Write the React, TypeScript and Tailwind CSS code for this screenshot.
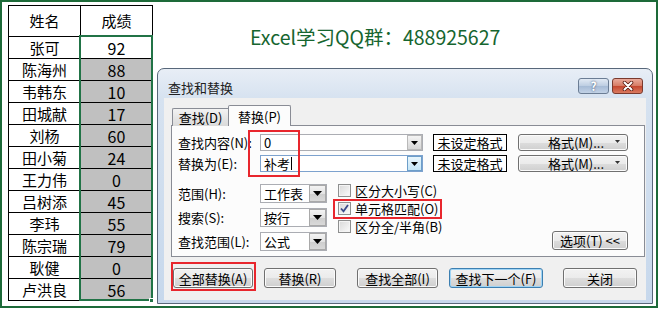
import React from "react";

const names = ["张可", "陈海州", "韦韩东", "田城献", "刘杨", "田小菊", "王力伟", "吕树添", "李玮", "陈宗瑞", "耿健", "卢洪良"];
const scores = [92, 88, 10, 17, 60, 24, 0, 45, 55, 79, 0, 56];

function Arrow({ big }: { big?: boolean }) {
  return big ? (
    <svg width="9" height="5" viewBox="0 0 9 5">
      <path d="M0 0H9L4.5 5Z" fill="#000" />
    </svg>
  ) : (
    <svg width="7" height="4" viewBox="0 0 7 4">
      <path d="M0 0H7L3.5 4Z" fill="#000" />
    </svg>
  );
}

function Btn({ children, className, focused }: { children: React.ReactNode; className?: string; focused?: boolean }) {
  return (
    <div
      className={`relative flex items-center justify-center rounded-[3px] border text-[13px] leading-none text-black bg-[linear-gradient(#f2f2f2_0%,#ebebeb_50%,#dddddd_51%,#cfcfcf_100%)] ${
        focused ? "border-[#3c7fb1] shadow-[inset_0_0_0_1px_#9fd4f5]" : "border-[#707070] shadow-[inset_0_0_0_1px_#fbfbfb]"
      } ${className ?? ""}`}
    >
      {children}
    </div>
  );
}

function Combo({ text, focused, cursor }: { text: string; focused?: boolean; cursor?: boolean }) {
  return (
    <div className={`flex h-[17px] w-[163px] border bg-white ${focused ? "border-[#7da2ce]" : "border-[#abadb3]"}`}>
      <div className="flex flex-1 items-center pl-[3px] text-[13px] leading-none">
        {text}
        {cursor && <span className="ml-px inline-block h-[13px] w-px bg-black" />}
      </div>
      <div
        className={`flex h-full w-[15px] items-center justify-center border ${
          focused ? "border-[#6d9ec9] bg-[linear-gradient(#e8f5fc,#c6e6f7)]" : "border-[#b9b9b9] bg-[linear-gradient(#f4f4f4,#d6d6d6)]"
        }`}
      >
        <Arrow />
      </div>
    </div>
  );
}

function Select({ text }: { text: string }) {
  return (
    <div className="flex h-[19px] w-[67px] border border-[#abadb3] bg-white">
      <div className="flex flex-1 items-center pl-[3px] text-[13px] leading-none">{text}</div>
      <div className="flex h-full w-[17px] items-center justify-center border border-[#a9a9a9] bg-[linear-gradient(#f3f3f3,#e3e3e3_50%,#cdcdcd_51%,#d9d9d9)]">
        <Arrow big />
      </div>
    </div>
  );
}

function Check({ checked }: { checked?: boolean }) {
  return (
    <div className="flex h-[13px] w-[13px] items-center justify-center border border-[#8e8f8f] bg-[linear-gradient(135deg,#d8d8d8,#fbfbfb)] shadow-[inset_0_0_0_1px_#f4f4f4]">
      {checked && (
        <svg width="9" height="9" viewBox="0 0 9 9">
          <path d="M1 4.5L3.5 7.3L8 1" stroke="#3b4a8a" strokeWidth="1.8" fill="none" />
        </svg>
      )}
    </div>
  );
}

function Table() {
  return (
    <div className="ml-[6px] mt-[3px] grid grid-cols-[72px_72px] border-l border-t border-black">
      <div className="flex h-[31px] items-center justify-center border-b border-r border-black text-[15px]">姓名</div>
      <div className="flex h-[31px] items-center justify-center border-b border-r border-black text-[15px]">成绩</div>
      {names.map((n, i) => (
        <React.Fragment key={n + i}>
          <div className="flex h-[22px] items-center justify-center border-b border-r border-black text-[15px] leading-none">{n}</div>
          <div
            className={`flex h-[22px] items-center justify-center border-b border-r border-black text-[16px] leading-none ${
              i === 0 ? "bg-white" : "bg-[#c0c0c0]"
            }`}
          >
            {scores[i]}
          </div>
        </React.Fragment>
      ))}
    </div>
  );
}

export default function App() {
  return (
    <div className="relative h-[310px] w-[659px] overflow-hidden bg-white font-['Noto_Sans_CJK_SC','Noto_Sans',sans-serif] text-black">
      <div className="flex h-[308px] w-[658px] items-start border-2 border-[#1d6a39]">
        <Table />
        <div className="ml-[97px] mt-[21px] whitespace-nowrap text-[19.5px] leading-[28px] text-[#16652f]">Excel学习QQ群：488925627</div>
      </div>

      {/* Excel selection */}
      <div className="absolute left-[79px] top-[35px] h-[266px] w-[74px] border-2 border-[#217346]" />
      <div className="absolute left-[149px] top-[298px] h-[5px] w-[5px] border border-white bg-[#217346]" />

      {/* Dialog */}
      <div className="absolute left-[157px] top-[68px] flex h-[236px] w-[496px] flex-col rounded-t-[7px] border border-[#58677a] bg-[linear-gradient(#e8eef6,#d6e2f0_30px,#c7d8ec)]">
        <div className="flex h-[29px] shrink-0 items-start">
          <span className="ml-[10px] mt-[11px] text-[13px] leading-[16px] text-[#202020]">查找和替换</span>
          <div className="ml-auto mr-[9px] mt-[9px] flex gap-[3px]">
            <div className="flex h-[16px] w-[31px] items-center justify-center rounded-[3px] border border-[#6b7d94] bg-[linear-gradient(#e2eaf4,#bccde2_50%,#a6bbd6_51%,#c2d2e6)] text-[12px] font-bold leading-none text-white [text-shadow:0_0_2px_#2a3f5f]">
              ?
            </div>
            <div className="flex h-[16px] w-[31px] items-center justify-center rounded-[3px] border border-[#7a3a2e] bg-[linear-gradient(#eaaa9b,#d67a63_50%,#c4462e_51%,#da7a60)]">
              <svg width="14" height="10" viewBox="0 0 14 10">
                <path d="M3.5 1.5L10.5 8.5M10.5 1.5L3.5 8.5" stroke="#5a1a10" strokeWidth="3.6" strokeLinecap="round" />
                <path d="M3.5 1.5L10.5 8.5M10.5 1.5L3.5 8.5" stroke="#fff" strokeWidth="2" strokeLinecap="round" />
              </svg>
            </div>
          </div>
        </div>

        <div className="mx-[6px] mb-[3px] flex flex-1 flex-col bg-[#f0f0f0]">
          {/* Tabs */}
          <div className="relative z-10 -mb-px ml-[8px] mt-[7px] flex h-[21px] items-end">
            <div className="flex h-[18px] w-[56px] items-center justify-center rounded-tl-[2px] border border-b-0 border-r-0 border-[#898c95] bg-[linear-gradient(#f3f3f3,#e6e6e6_50%,#dadada)] text-[13px] leading-none">
              查找(D)
            </div>
            <div className="flex h-[21px] w-[63px] items-center justify-center rounded-t-[2px] border border-b-0 border-[#898c95] bg-[#fcfcfc] text-[13px] leading-none">
              替换(P)
            </div>
          </div>

          {/* Panel */}
          <div className="ml-[7px] flex h-[132px] w-[474px] flex-col border border-[#898c95] bg-[#fcfcfc]">
            <div className="mt-[8px] flex h-[17px] items-center pl-[6px]">
              <div className="w-[82px] text-[13px] leading-none">查找内容(N):</div>
              <Combo text="0" />
              <div className="ml-[10px] flex h-[17px] w-[74px] items-center justify-center border border-black bg-white text-[13px] leading-none">未设定格式</div>
              <Btn className="ml-[11px] h-[17px] w-[110px]">
                <span className="pl-[6px]">格式(M)...</span>
                <span className="absolute right-[7px] top-[5px]">
                  <svg width="5" height="3" viewBox="0 0 5 3">
                    <path d="M0 0H5L2.5 3Z" fill="#333" />
                  </svg>
                </span>
              </Btn>
            </div>
            <div className="mt-[4px] flex h-[17px] items-center pl-[6px]">
              <div className="w-[82px] text-[13px] leading-none">替换为(E):</div>
              <Combo text="补考" focused cursor />
              <div className="ml-[10px] flex h-[17px] w-[74px] items-center justify-center border border-black bg-white text-[13px] leading-none">未设定格式</div>
              <Btn className="ml-[11px] h-[17px] w-[110px]">
                <span className="pl-[6px]">格式(M)...</span>
                <span className="absolute right-[7px] top-[5px]">
                  <svg width="5" height="3" viewBox="0 0 5 3">
                    <path d="M0 0H5L2.5 3Z" fill="#333" />
                  </svg>
                </span>
              </Btn>
            </div>

            <div className="mt-[12px] flex flex-1 pl-[6px]">
              <div className="flex flex-col gap-[5px]">
                {[
                  ["范围(H):", "工作表"],
                  ["搜索(S):", "按行"],
                  ["查找范围(L):", "公式"],
                ].map(([l, v]) => (
                  <div key={l} className="flex h-[19px] items-center">
                    <div className="w-[82px] text-[13px] leading-none">{l}</div>
                    <Select text={v} />
                  </div>
                ))}
              </div>
              <div className="-mt-[3px] ml-[11px] flex flex-col">
                {[
                  ["区分大小写(C)", false],
                  ["单元格匹配(O)", true],
                  ["区分全/半角(B)", false],
                ].map(([l, c]) => (
                  <div key={l as string} className="flex h-[18px] items-center">
                    <Check checked={c as boolean} />
                    <span className="ml-[4px] text-[13px] leading-none">{l as string}</span>
                  </div>
                ))}
              </div>
              <div className="flex flex-1 items-end justify-end pb-[6px] pr-[16px]">
                <Btn className="h-[19px] w-[76px]">选项(T) &lt;&lt;</Btn>
              </div>
            </div>
          </div>

          {/* Bottom buttons */}
          <div className="ml-[9px] mt-[11px] flex h-[20px]">
            <Btn className="h-[20px] w-[80px]">全部替换(A)</Btn>
            <Btn className="ml-[11px] h-[20px] w-[72px]">替换(R)</Btn>
            <Btn className="ml-[21px] h-[20px] w-[81px]">查找全部(I)</Btn>
            <Btn className="ml-[11px] h-[20px] w-[94px]" focused>
              查找下一个(F)
            </Btn>
            <Btn className="ml-[20px] h-[20px] w-[74px]">关闭</Btn>
          </div>
        </div>
      </div>

      {/* Red annotation boxes */}
      <div className="absolute left-[248px] top-[130px] h-[47px] w-[52px] border-2 border-[#e8262d]" />
      <div className="absolute left-[333px] top-[199px] h-[20px] w-[109px] border-2 border-[#e8262d]" />
      <div className="absolute left-[171px] top-[262px] h-[29px] w-[85px] border-2 border-[#e8262d]" />
    </div>
  );
}
